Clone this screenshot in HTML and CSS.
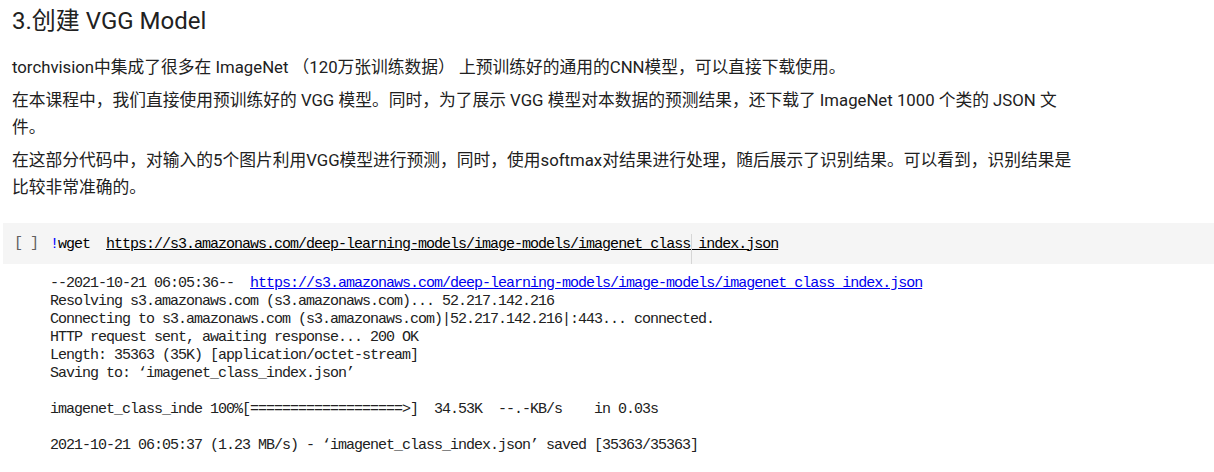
FILE: index.html
```html
<!DOCTYPE html>
<html lang="zh-CN">
<head>
<meta charset="utf-8">
<link rel="stylesheet" href="styles.css">
</head>
<body>
<div class="md">
  <h3 class="title">3.创建 VGG Model</h3>
  <p class="para">torchvision中集成了很多在 ImageNet （120万张训练数据） 上预训练好的通用的CNN模型，可以直接下载使用。</p>
  <p class="para">在本课程中，我们直接使用预训练好的 VGG 模型。同时，为了展示 VGG 模型对本数据的预测结果，还下载了 ImageNet 1000 个类的 JSON 文件。</p>
  <p class="para">在这部分代码中，对输入的5个图片利用VGG模型进行预测，同时，使用softmax对结果进行处理，随后展示了识别结果。可以看到，识别结果是比较非常准确的。</p>
</div>
<div class="cell">
  <div class="cell-input">
    <span class="run">[ ]</span>
    <div class="editor">
      <span class="ruler"></span>
      <span class="code"><span class="bang">!</span>wget  <span class="url">https://s3.amazonaws.com/deep-learning-models/image-models/imagenet_class_index.json</span></span>
    </div>
  </div>
  <pre class="output">--2021-10-21 06:05:36--  <a class="link">https://s3.amazonaws.com/deep-learning-models/image-models/imagenet_class_index.json</a>
Resolving s3.amazonaws.com (s3.amazonaws.com)... 52.217.142.216
Connecting to s3.amazonaws.com (s3.amazonaws.com)|52.217.142.216|:443... connected.
HTTP request sent, awaiting response... 200 OK
Length: 35363 (35K) [application/octet-stream]
Saving to: ‘imagenet_class_index.json’

imagenet_class_inde 100%[===================>]  34.53K  --.-KB/s    in 0.03s

2021-10-21 06:05:37 (1.23 MB/s) - ‘imagenet_class_index.json’ saved [35363/35363]
</pre>
</div>
</body>
</html>
```
FILE: styles.css
```css
html, body {
  margin: 0;
  padding: 0;
  background: #ffffff;
}
body {
  font-family: Roboto, "Noto Sans CJK SC", sans-serif;
  color: #212121;
  width: 1214px;
  height: 472px;
  overflow: hidden;
}
.md {
  padding: 3px 12px 0 12px;
  width: 1066px;
}
.title {
  font-size: 24px;
  font-weight: 400;
  line-height: 36px;
  margin: 0 0 15px 0;
}
.para {
  font-size: 16.75px;
  line-height: 27px;
  margin: 0 0 6px 0;
}
.cell {
  margin-top: 22px;
  margin-left: 3px;
}
.cell-input {
  background: #f5f5f5;
  height: 41px;
  display: flex;
  align-items: center;
}
.run {
  font-family: "Liberation Mono", monospace;
  font-size: 15px;
  letter-spacing: -1px;
  color: #616161;
  width: 47px;
  padding-left: 11px;
  box-sizing: border-box;
  white-space: pre;
}
.editor {
  position: relative;
  align-self: stretch;
  display: flex;
  align-items: center;
  flex: 1;
}
.ruler {
  position: absolute;
  left: 641px;
  top: 11px;
  bottom: 0;
  width: 1px;
  background: #d6d6d6;
}
.code {
  font-family: "Liberation Mono", monospace;
  font-size: 15px;
  letter-spacing: -1px;
  white-space: pre;
  color: #000;
  padding-top: 1px;
}
.bang {
  color: #0000ff;
}
.url {
  text-decoration: underline;
}
.output {
  margin: 11px 0 0 47px;
  font-family: "Liberation Mono", monospace;
  font-size: 15px;
  letter-spacing: -1px;
  line-height: 18px;
  color: #212121;
}
.link {
  color: #0000ee;
  text-decoration: underline;
}
```
